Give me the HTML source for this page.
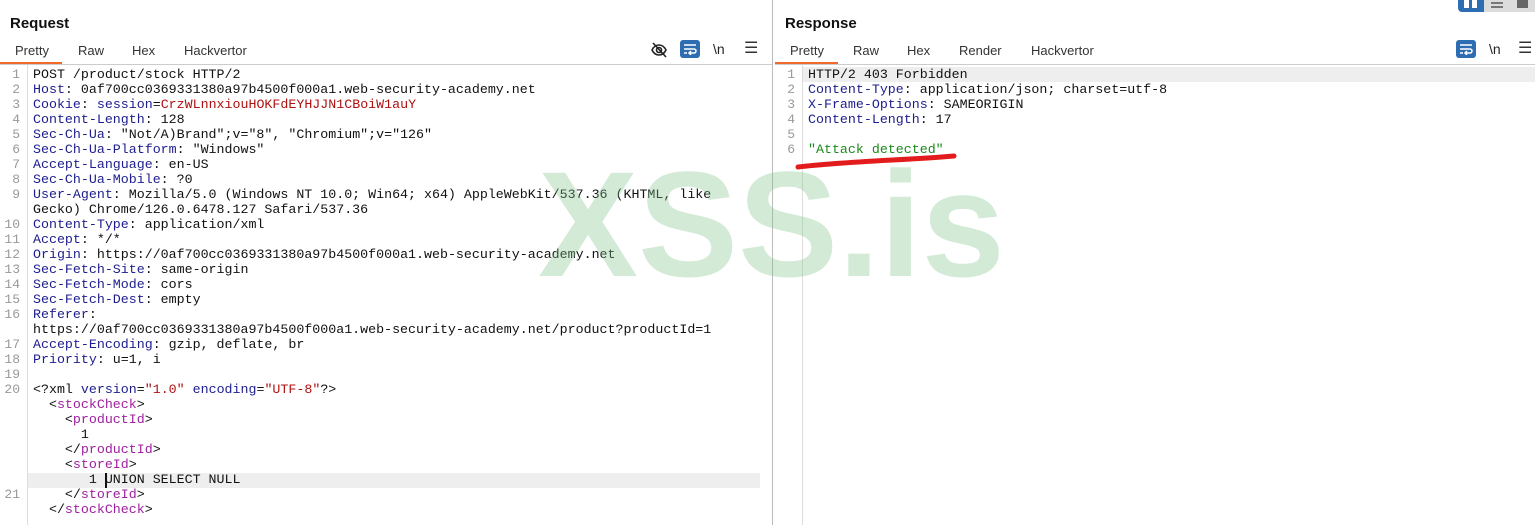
<!DOCTYPE html>
<html><head><meta charset="utf-8"><style>
*{margin:0;padding:0;box-sizing:border-box}
body{width:1535px;height:525px;background:#fff;position:relative;overflow:hidden;font-family:"Liberation Sans",Arial,sans-serif}
.title{position:absolute;top:15px;font-weight:bold;font-size:15px;color:#111}
.tabs{position:absolute;top:43px;font-size:13px;color:#333}
.tabs span{position:absolute;white-space:nowrap}
.ul{position:absolute;top:62px;height:2px;background:#f06a2d}
.hl{position:absolute;top:64px;height:1px;background:#ccc}
.gut{position:absolute;top:65px;bottom:0;width:1px;background:#ddd}
.code{position:absolute;font-family:"Liberation Mono",monospace;font-size:13.3px;line-height:15px;white-space:pre;color:#111}
.ln{position:absolute;font-family:"Liberation Mono",monospace;font-size:13px;line-height:15px;color:#999;text-align:right;white-space:pre}
.k{color:#1d1d8f}.r{color:#b01010}.p{color:#a020a0}.g{color:#1a8a1a}
.wm{position:absolute;left:538px;top:138px;font-weight:bold;font-size:150px;color:rgba(130,195,140,0.35);letter-spacing:0}
.btn{position:absolute;width:20px;height:18px;background:#2f6db3;border-radius:3px}
</style></head><body>
<div class="title" style="left:10px">Request</div>
<div class="tabs" style="left:0;width:770px"><span style="left:15px">Pretty</span><span style="left:78px">Raw</span><span style="left:132px">Hex</span><span style="left:184px">Hackvertor</span></div>
<div class="ul" style="left:0;width:62px"></div>
<div class="hl" style="left:0;width:772px"></div>
<div style="position:absolute;left:772px;top:0;bottom:0;width:1px;background:#bbb"></div>
<svg style="position:absolute;left:650px;top:41px" width="18" height="18" viewBox="0 0 18 18" fill="none" stroke="#222" stroke-width="1.6"><path d="M2 9c2-4 5-5 7-5s5 1 7 5c-2 4-5 5-7 5s-5-1-7-5z"/><circle cx="9" cy="9" r="2.5"/><path d="M3 2l13 14"/></svg>
<div class="btn" style="left:680px;top:40px"></div>
<svg style="position:absolute;left:683px;top:43px" width="14" height="12" viewBox="0 0 14 12" fill="none" stroke="#fff" stroke-width="1.5"><path d="M1 2h12M1 6h10a2 2 0 0 1 0 4H7M1 10h3M8 8l-2 2 2 2"/></svg>
<div style="position:absolute;left:713px;top:41px;font-size:14px;color:#222">\n</div>
<div style="position:absolute;left:744px;top:38px;font-size:16px;color:#333">☰</div>
<div class="ln" style="left:0;top:67px;width:20px">1
2
3
4
5
6
7
8
9

10
11
12
13
14
15
16

17
18
19
20






21</div>
<div style="position:absolute;left:28px;top:473px;width:732px;height:15px;background:#eee"></div>
<div class="gut" style="left:27px"></div>
<div class="code" style="left:33px;top:67px">POST /product/stock HTTP/2
<span class="k">Host</span>: 0af700cc0369331380a97b4500f000a1.web-security-academy.net
<span class="k">Cookie</span>: <span class="k">session</span>=<span class="r">CrzWLnnxiouHOKFdEYHJJN1CBoiW1auY</span>
<span class="k">Content-Length</span>: 128
<span class="k">Sec-Ch-Ua</span>: "Not/A)Brand";v="8", "Chromium";v="126"
<span class="k">Sec-Ch-Ua-Platform</span>: "Windows"
<span class="k">Accept-Language</span>: en-US
<span class="k">Sec-Ch-Ua-Mobile</span>: ?0
<span class="k">User-Agent</span>: Mozilla/5.0 (Windows NT 10.0; Win64; x64) AppleWebKit/537.36 (KHTML, like
Gecko) Chrome/126.0.6478.127 Safari/537.36
<span class="k">Content-Type</span>: application/xml
<span class="k">Accept</span>: */*
<span class="k">Origin</span>: https://0af700cc0369331380a97b4500f000a1.web-security-academy.net
<span class="k">Sec-Fetch-Site</span>: same-origin
<span class="k">Sec-Fetch-Mode</span>: cors
<span class="k">Sec-Fetch-Dest</span>: empty
<span class="k">Referer</span>:
https://0af700cc0369331380a97b4500f000a1.web-security-academy.net/product?productId=1
<span class="k">Accept-Encoding</span>: gzip, deflate, br
<span class="k">Priority</span>: u=1, i

&lt;?xml <span class="k">version</span>=<span class="r">"1.0"</span> <span class="k">encoding</span>=<span class="r">"UTF-8"</span>?&gt;
  &lt;<span class="p">stockCheck</span>&gt;
    &lt;<span class="p">productId</span>&gt;
      1
    &lt;/<span class="p">productId</span>&gt;
    &lt;<span class="p">storeId</span>&gt;
       1 UNION SELECT NULL
    &lt;/<span class="p">storeId</span>&gt;
  &lt;/<span class="p">stockCheck</span>&gt;</div>
<div style="position:absolute;left:105px;top:473px;width:2px;height:15px;background:#111"></div>

<div class="title" style="left:785px">Response</div>
<div class="tabs" style="left:775px;width:760px"><span style="left:15px">Pretty</span><span style="left:78px">Raw</span><span style="left:132px">Hex</span><span style="left:184px">Render</span><span style="left:256px">Hackvertor</span></div>
<div class="ul" style="left:775px;width:63px"></div>
<div class="hl" style="left:775px;width:760px"></div>
<div class="btn" style="left:1456px;top:40px"></div>
<svg style="position:absolute;left:1459px;top:43px" width="14" height="12" viewBox="0 0 14 12" fill="none" stroke="#fff" stroke-width="1.5"><path d="M1 2h12M1 6h10a2 2 0 0 1 0 4H7M1 10h3M8 8l-2 2 2 2"/></svg>
<div style="position:absolute;left:1489px;top:41px;font-size:14px;color:#222">\n</div>
<div style="position:absolute;left:1518px;top:38px;font-size:16px;color:#333">☰</div>
<div style="position:absolute;left:1458px;top:0;width:26px;height:12px;background:#2f6db3;border-radius:0 0 0 4px"></div>
<div style="position:absolute;left:1464px;top:0;width:5px;height:8px;background:#fff"></div><div style="position:absolute;left:1472px;top:0;width:5px;height:8px;background:#fff"></div>
<div style="position:absolute;left:1484px;top:0;width:51px;height:12px;background:#dcdcdc"></div>
<div style="position:absolute;left:1491px;top:2px;width:12px;height:2px;background:#777"></div><div style="position:absolute;left:1491px;top:6px;width:12px;height:2px;background:#777"></div>
<div style="position:absolute;left:1517px;top:0;width:11px;height:8px;background:#666"></div>
<div style="position:absolute;left:803px;top:67px;width:732px;height:15px;background:#eee"></div>
<div class="ln" style="left:775px;top:67px;width:20px">1
2
3
4
5
6</div>
<div class="gut" style="left:802px"></div>
<div class="code" style="left:808px;top:67px">HTTP/2 403 Forbidden
<span class="k">Content-Type</span>: application/json; charset=utf-8
<span class="k">X-Frame-Options</span>: SAMEORIGIN
<span class="k">Content-Length</span>: 17

<span class="g">"Attack detected"</span></div>
<svg style="position:absolute;left:790px;top:150px" width="180" height="22"><path d="M8 17 C60 11 120 10 164 6" stroke="#e21c1c" stroke-width="5" stroke-linecap="round" fill="none"/></svg>
<div class="wm">XSS.is</div>
</body></html>
